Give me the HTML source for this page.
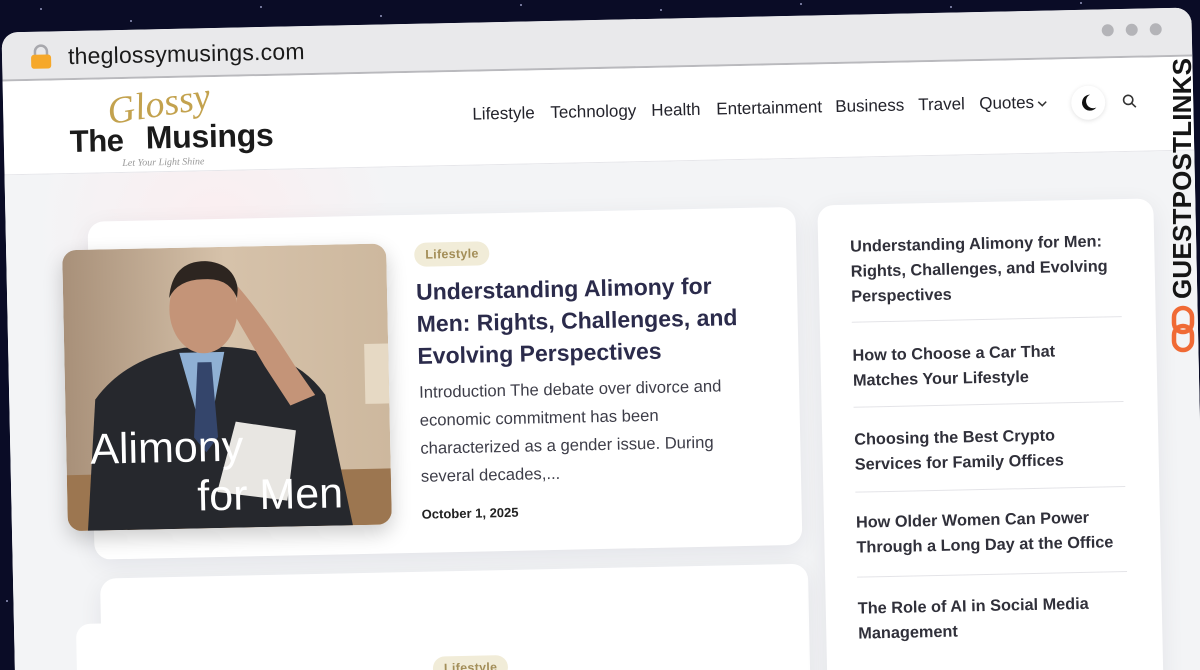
<!DOCTYPE html>
<html><head><meta charset="utf-8"><style>
*{margin:0;padding:0;box-sizing:border-box}
html,body{width:1200px;height:670px;overflow:hidden;background:#0a0c26;font-family:"Liberation Sans",sans-serif}
#root{position:relative;width:1200px;height:670px;overflow:hidden;background:#0a0c26}
.star{position:absolute;width:2px;height:2px;background:#cfd3ff;border-radius:50%;opacity:.7}
#w{position:absolute;left:0;top:0;width:1200px;height:670px;transform:rotate(-1.2deg);transform-origin:600px 335px}
.win{position:absolute;left:8px;top:20px;width:1190px;height:700px;background:#fff;border-radius:16px;overflow:hidden}
.tab{position:absolute;left:0;top:0;width:100%;height:49px;background:#e9e9eb;border-bottom:2px solid #b9b9bd}
.url{position:absolute;left:66px;top:12px;font-size:23px;color:#1a1a1a;letter-spacing:.2px}
.dot{position:absolute;top:15px;width:12px;height:12px;border-radius:50%;background:#b4b4b8}
.hdr{position:absolute;left:0;top:49px;width:100%;height:94px;background:#fff;border-bottom:1px solid #e6e6ea}
.nav{position:absolute;top:33px;font-size:17px;color:#23232b}
.main{position:absolute;left:0;top:143px;width:100%;height:560px;background:radial-gradient(circle at 210px 60px,#fbeef0 0,#f3f4f6 180px),#f3f4f6;overflow:hidden}
.card{position:absolute;background:#fff;border-radius:16px;box-shadow:0 6px 24px rgba(20,20,60,.07)}
.tag{position:absolute;height:24px;padding:0 11px;line-height:24px;border-radius:12px;background:#f1ecd8;color:#a38e58;font-size:12.5px;font-weight:bold;letter-spacing:.3px}
.side a{position:absolute;left:32px;width:272px;font-size:16.3px;font-weight:bold;color:#30303a;line-height:25px;text-decoration:none}
.side i{position:absolute;left:32px;width:270px;height:1px;background:#e4e4e8}
</style></head><body><div id="root">
<div class="star" style="left:40px;top:8px"></div><div class="star" style="left:130px;top:20px"></div><div class="star" style="left:260px;top:6px"></div><div class="star" style="left:380px;top:15px"></div><div class="star" style="left:520px;top:4px"></div><div class="star" style="left:660px;top:9px"></div><div class="star" style="left:800px;top:3px"></div><div class="star" style="left:950px;top:6px"></div><div class="star" style="left:1080px;top:2px"></div><div class="star" style="left:8px;top:50px"></div><div class="star" style="left:14px;top:300px"></div><div class="star" style="left:6px;top:600px"></div>
<div id="w"><div class="win">
 <div class="tab">
  <svg style="position:absolute;left:28px;top:12px" width="22" height="26" viewBox="0 0 22 26"><path d="M5 12V8a6 6 0 0 1 12 0v4" fill="none" stroke="#a8a8ad" stroke-width="2.5"/><rect x="1" y="11" width="20" height="14" rx="3" fill="#f6a82a"/></svg>
  <div class="url">theglossymusings.com</div>
  <div class="dot" style="left:1100px"></div><div class="dot" style="left:1124px"></div><div class="dot" style="left:1148px"></div>
 </div>
 <div class="hdr">
  <div style="position:absolute;left:104px;top:4px;font-family:'Liberation Serif',serif;font-style:italic;font-size:38px;color:#c3a24e;transform:rotate(-8deg)">Glossy</div>
  <div style="position:absolute;left:66px;top:44px;font-size:31px;font-weight:900;color:#1b1b1b;letter-spacing:-.5px">The</div>
  <div style="position:absolute;left:142px;top:41px;font-size:32px;font-weight:900;color:#1b1b1b;letter-spacing:-.3px">Musings</div>
  <div style="position:absolute;left:118px;top:79px;font-family:'Liberation Serif',serif;font-style:italic;font-size:10px;color:#999">Let Your Light Shine</div>
  <div class="nav" style="left:469px">Lifestyle</div>
  <div class="nav" style="left:547px">Technology</div>
  <div class="nav" style="left:648px">Health</div>
  <div class="nav" style="left:713px">Entertainment</div>
  <div class="nav" style="left:832px">Business</div>
  <div class="nav" style="left:915px">Travel</div>
  <div class="nav" style="left:976px">Quotes</div>
  <svg style="position:absolute;left:1034px;top:40px" width="10" height="8" viewBox="0 0 10 8"><path d="M1 2l4 4 4-4" fill="none" stroke="#333" stroke-width="1.5"/></svg>
  <div style="position:absolute;left:1068px;top:27px;width:34px;height:34px;border-radius:50%;background:#fff;box-shadow:0 1px 5px rgba(0,0,0,.12)"><svg style="position:absolute;left:9px;top:8px" width="17" height="18" viewBox="0 0 17 18"><path d="M10 1a8 8 0 1 0 6 13A7 7 0 0 1 10 1z" fill="#111"/></svg></div>
  <svg style="position:absolute;left:1119px;top:36px" width="15" height="15" viewBox="0 0 15 15"><circle cx="6" cy="6" r="4.6" fill="none" stroke="#333" stroke-width="1.6"/><path d="M9.5 9.5l4 4" stroke="#333" stroke-width="1.6"/></svg>
 </div>
 <div class="main">
  <div class="card" style="left:82px;top:48px;width:708px;height:338px">
   <div class="tag" style="left:326px;top:28px">Lifestyle</div>
   <div style="position:absolute;left:327px;top:61px;width:330px;font-size:23px;font-weight:bold;color:#2b2b4b;line-height:32px">Understanding Alimony for Men: Rights, Challenges, and Evolving Perspectives</div>
   <div style="position:absolute;left:328px;top:164px;width:332px;font-size:16.6px;color:#3d3d48;line-height:28px">Introduction The debate over divorce and economic commitment has been characterized as a gender issue. During several decades,...</div>
   <div style="position:absolute;left:328px;top:292px;font-size:13px;font-weight:bold;color:#222">October 1, 2025</div>
  </div>
  <svg style="position:absolute;left:56px;top:76px;border-radius:14px;box-shadow:0 8px 20px rgba(0,0,0,.2)" width="324" height="281" viewBox="0 0 324 281">
   <defs><linearGradient id="bg" x1="0" y1="0" x2="1" y2="0"><stop offset="0" stop-color="#a89079"/><stop offset=".5" stop-color="#d6c2aa"/><stop offset="1" stop-color="#cdb89e"/></linearGradient></defs>
   <rect width="324" height="281" fill="url(#bg)"/>
   <rect x="300" y="100" width="24" height="60" fill="#e6d9c4"/>
   <rect x="0" y="225" width="324" height="56" fill="#9c7650"/>
   <path d="M20 281 L30 150 Q60 110 120 100 L160 100 Q230 105 260 150 L285 281Z" fill="#26282d"/>
   <path d="M115 105 L140 200 L160 105Z" fill="#8fb0d4"/>
   <path d="M133 115 L147 115 L152 190 L140 205 L128 190Z" fill="#34456b"/>
   <ellipse cx="140" cy="62" rx="34" ry="44" fill="#c49478"/>
   <path d="M106 50 Q110 12 145 14 Q178 18 175 55 Q168 30 140 32 Q115 32 106 50Z" fill="#2d2520"/>
   <path d="M175 40 Q200 70 230 120 L250 150 L225 160 L200 120 L172 70Z" fill="#c49478"/>
   <path d="M170 175 L230 185 L220 255 L150 245Z" fill="#e8e6e2"/>
   <text x="24" y="214" font-family="Liberation Sans,sans-serif" font-size="43" fill="#fff">Alimony</text>
   <text x="130" y="263" font-family="Liberation Sans,sans-serif" font-size="43" fill="#fff">for Men</text>
  </svg>
  <div class="card" style="left:87px;top:405px;width:708px;height:300px"></div>
  <div style="position:absolute;left:62px;top:450px;width:330px;height:260px;background:#fff;border-radius:14px"></div>
  <div class="tag" style="left:418px;top:490px">Lifestyle</div>
  <div class="card side" style="left:812px;top:47px;width:336px;height:600px">
   <a style="top:30px">Understanding Alimony for Men: Rights, Challenges, and Evolving Perspectives</a>
   <i style="top:117px"></i>
   <a style="top:139px">How to Choose a Car That Matches Your Lifestyle</a>
   <i style="top:202px"></i>
   <a style="top:223px">Choosing the Best Crypto Services for Family Offices</a>
   <i style="top:287px"></i>
   <a style="top:306px">How Older Women Can Power Through a Long Day at the Office</a>
   <i style="top:372px"></i>
   <a style="top:392px">The Role of AI in Social Media Management</a>
  </div>
 </div>
</div>
</div>
<div style="position:absolute;left:1062px;top:162px;width:240px;height:34px;transform:rotate(-90deg);font-size:26px;font-weight:900;color:#151515;letter-spacing:.2px;text-align:center;line-height:34px">GUESTPOSTLINKS</div>
<svg style="position:absolute;left:1169px;top:305px" width="28" height="48" viewBox="0 0 28 48"><rect x="5" y="3" width="18" height="24" rx="9" fill="none" stroke="#f06a35" stroke-width="4.5"/><rect x="5" y="21" width="18" height="24" rx="9" fill="none" stroke="#f06a35" stroke-width="4.5"/></svg>
</div></body></html>
